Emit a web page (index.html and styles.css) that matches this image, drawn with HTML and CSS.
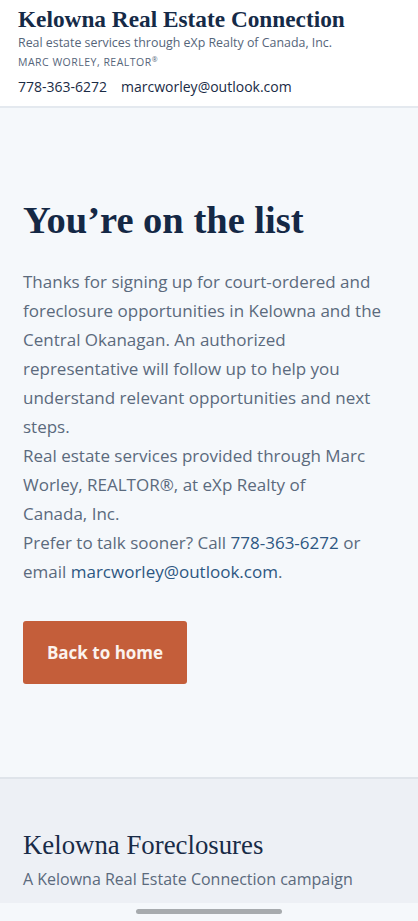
FILE: index.html
```html
<!DOCTYPE html>
<html lang="en">
<head>
<meta charset="utf-8">
<meta name="viewport" content="width=device-width, initial-scale=1">
<title>You're on the list</title>
<link rel="stylesheet" href="styles.css">
</head>
<body>
<header class="site-header">
  <div class="brand">Kelowna Real Estate Connection</div>
  <div class="brand-sub">Real estate services through eXp Realty of Canada, Inc.</div>
  <div class="brand-agent">MARC WORLEY, REALTOR<sup>®</sup></div>
  <div class="contact">
    <a href="#">778-363-6272</a>
    <a href="#">marcworley@outlook.com</a>
  </div>
</header>
<main class="main">
  <h1 class="title">You’re on the list</h1>
  <p class="copy">Thanks for signing up for court-ordered and foreclosure opportunities in Kelowna and the Central Okanagan. An authorized representative will follow up to help you understand relevant opportunities and next steps.<br>Real estate services provided through Marc Worley, REALTOR®, at eXp Realty of<br>Canada, Inc.<br>Prefer to talk sooner? Call <a href="#">778-363-6272</a> or email <a href="#">marcworley@outlook.com</a>.</p>
  <a class="btn" href="#">Back to home</a>
</main>
<footer class="site-footer">
  <div class="foot-title">Kelowna Foreclosures</div>
  <div class="foot-sub">A Kelowna Real Estate Connection campaign</div>
</footer>
<div class="home-bar"><span class="home-pill"></span></div>
</body>
</html>
```

FILE: styles.css
```css
* { box-sizing: border-box; }
html, body { margin: 0; padding: 0; }
body {
  background: #f5f8fb;
  font-family: "Open Sans", "Noto Sans", sans-serif;
  color: #1a2b45;
}
a { text-decoration: none; color: inherit; }

.site-header {
  background: #ffffff;
  border-bottom: 2px solid #e4e9ef;
  padding: 6px 18px 10px;
  height: 108px;
}
.brand {
  font-family: "Liberation Serif", serif;
  font-weight: 700;
  font-size: 23.3px;
  line-height: 27px;
  color: #152a47;
}
.brand-sub {
  font-size: 12.4px;
  line-height: 18px;
  color: #55657a;
  margin-top: 1px;
}
.brand-agent {
  font-size: 10.5px;
  line-height: 18px;
  letter-spacing: 0.5px;
  color: #55657a;
  margin-top: 1px;
}
.brand-agent sup { font-size: 7px; vertical-align: 4px; line-height: 0; }
.contact {
  display: flex;
  gap: 14px;
  margin-top: 7px;
  font-size: 14px;
  line-height: 18px;
  color: #1a2b45;
}

.main {
  padding: 92px 23px 93px;
}
.title {
  margin: 0;
  font-family: "Liberation Serif", serif;
  font-weight: 700;
  font-size: 38.5px;
  line-height: 40px;
  color: #142845;
}
.copy {
  margin: 27px 0 0;
  font-size: 17px;
  line-height: 29px;
  color: #5b6a7d;
}
.copy a { color: #2d5782; }
.btn {
  display: inline-flex;
  align-items: center;
  justify-content: center;
  margin-top: 35px;
  width: 164px;
  height: 63px;
  background: #c45e3a;
  color: #fbf3ee;
  border-radius: 3px;
  font-weight: 700;
  font-size: 17px;
}

.site-footer {
  background: #edf0f5;
  border-top: 2px solid #dfe4ea;
  padding: 50px 23px 28px;
}
.foot-title {
  font-family: "Liberation Serif", serif;
  font-size: 26.8px;
  line-height: 32px;
  color: #182b47;
}
.foot-sub {
  margin-top: 7px;
  font-size: 16px;
  line-height: 22px;
  color: #5b6a7d;
}

.home-bar {
  position: fixed;
  left: 0;
  right: 0;
  bottom: 0;
  height: 18px;
  background: #f5f8fb;
  display: flex;
  justify-content: center;
  padding-top: 6px;
}
.home-pill {
  width: 146px;
  height: 5px;
  border-radius: 3px;
  background: #a7abae;
}
```
